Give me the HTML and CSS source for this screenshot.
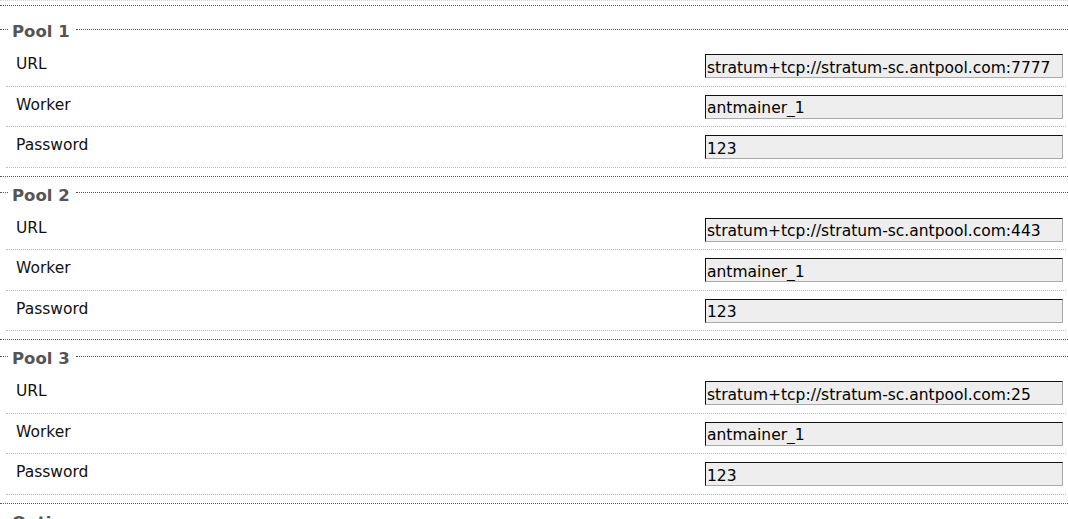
FILE: index.html
```html
<!DOCTYPE html>
<html>
<head>
<meta charset="utf-8">
<link rel="stylesheet" href="styles.css">
</head>
<body>
<div class="page">
  <div class="top"></div>

  <section class="pool first">
    <div class="legend"><span class="legend-text">Pool 1</span></div>
    <div class="rows">
      <div class="row"><span class="label">URL</span><input class="field" type="text" value="stratum+tcp://stratum-sc.antpool.com:7777" readonly></div>
      <div class="row"><span class="label">Worker</span><input class="field" type="text" value="antmainer_1" readonly></div>
      <div class="row"><span class="label">Password</span><input class="field" type="text" value="123" readonly></div>
    </div>
  </section>

  <section class="pool">
    <div class="legend"><span class="legend-text">Pool 2</span></div>
    <div class="rows">
      <div class="row"><span class="label">URL</span><input class="field" type="text" value="stratum+tcp://stratum-sc.antpool.com:443" readonly></div>
      <div class="row"><span class="label">Worker</span><input class="field" type="text" value="antmainer_1" readonly></div>
      <div class="row"><span class="label">Password</span><input class="field" type="text" value="123" readonly></div>
    </div>
  </section>

  <section class="pool">
    <div class="legend"><span class="legend-text">Pool 3</span></div>
    <div class="rows">
      <div class="row"><span class="label">URL</span><input class="field" type="text" value="stratum+tcp://stratum-sc.antpool.com:25" readonly></div>
      <div class="row"><span class="label">Worker</span><input class="field" type="text" value="antmainer_1" readonly></div>
      <div class="row"><span class="label">Password</span><input class="field" type="text" value="123" readonly></div>
    </div>
  </section>

  <section class="pool">
    <div class="legend"><span class="legend-text">Options</span></div>
  </section>
</div>
</body>
</html>
```

FILE: styles.css
```css
html, body {
  margin: 0;
  padding: 0;
  background: #fff;
  overflow: hidden;
}

.page {
  font-family: "DejaVu Sans", Verdana, sans-serif;
  font-size: 15.5px;
  color: #000;
}

.top {
  height: 4px;
  border-top: 1px dotted #d0d0d0;
  border-bottom: 1px dotted #555;
}

.pool {
  margin-top: 4px;
  padding-bottom: 8px;
  border-bottom: 1px dotted #555;
}

.pool.first {
  margin-top: 11px;
}

.legend {
  height: 24px;
  display: flex;
  align-items: center;
}

.legend::before {
  content: "";
  width: 8px;
  border-top: 1px dotted #555;
}

.legend::after {
  content: "";
  flex: 1;
  border-top: 1px dotted #555;
}

.legend-text {
  padding: 6px 6px 0 4px;
  font-weight: bold;
  font-size: 16.5px;
  color: #555;
  line-height: 18px;
}

.rows {
  margin-top: 5px;
  margin-left: 6px;
  margin-right: 2px;
}

.row {
  height: 39.5px;
  display: grid;
  grid-template-columns: 1fr 358px;
  align-items: start;
  padding: 0 3px 0 10px;
  border-bottom: 1px dotted #bbb;
}

.label {
  padding-top: 9px;
  line-height: 18px;
  color: #111;
}

.field {
  margin: 8px 0 0 0;
  box-sizing: border-box;
  width: 358px;
  height: 24px;
  padding: 3px 1px 0 1px;
  border: 1px solid;
  border-color: #111 #aaa #aaa #111;
  background: #eeeeee;
  font-family: "DejaVu Sans", Verdana, sans-serif;
  font-size: 15.5px;
  color: #000;
  outline: none;
}
```
